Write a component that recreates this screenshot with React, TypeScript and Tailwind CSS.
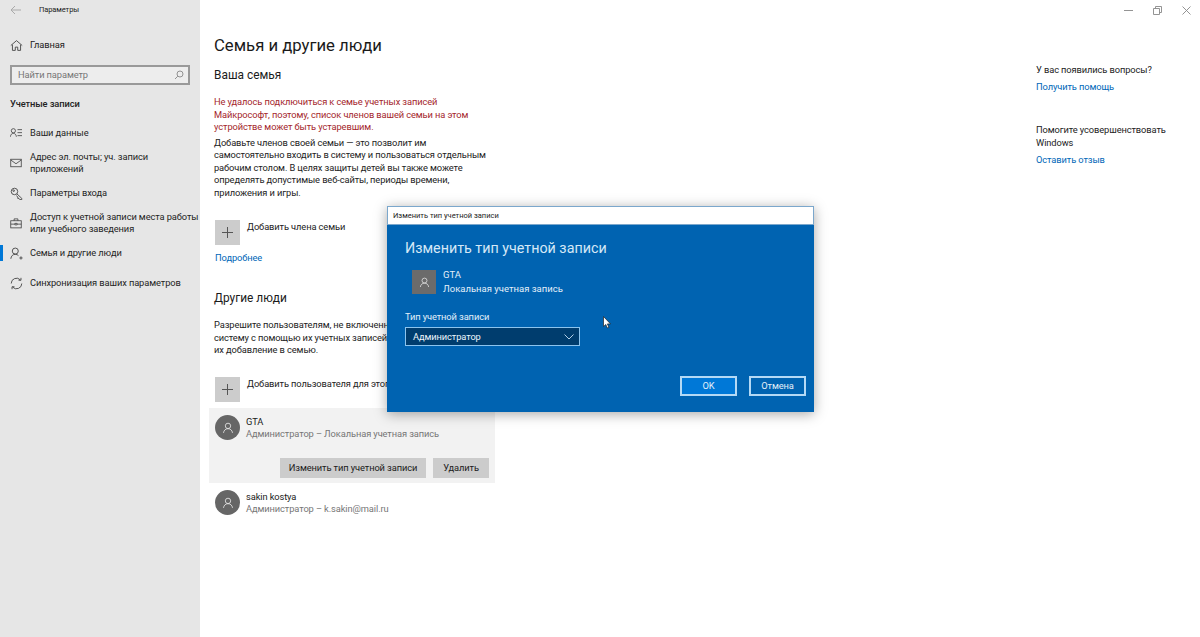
import React from "react";

const Ic = ({ children, size = 14, className = "" }: { children: React.ReactNode; size?: number; className?: string }) => (
  <svg width={size} height={size} viewBox="0 0 16 16" fill="none" stroke="currentColor" strokeWidth={1.1} className={className}>
    {children}
  </svg>
);

const Person = ({ size = 14, className = "" }: { size?: number; className?: string }) => (
  <Ic size={size} className={className}>
    <circle cx="8" cy="5.2" r="3.6" />
    <path d="M2 14.5c.4-3.4 2.8-5.6 6-5.6s5.600 2.200 6 5.600" />
  </Ic>
);

const Plus = () => (
  <div className="w-[25px] h-[25px] bg-[#cccccc] flex items-center justify-center shrink-0 text-[#555]">
    <svg width="11" height="11" viewBox="0 0 11 11" stroke="currentColor" strokeWidth="1">
      <path d="M5.500 0v11M0 5.500h11" />
    </svg>
  </div>
);

const NavItem = ({ icon, lines, active }: { icon: React.ReactNode; lines: string[]; active?: boolean }) => (
  <div className="relative flex items-center h-[30px] pl-[10px] text-[#1f1f1f]">
    {active && <div className="absolute left-0 top-[7px] w-[3px] h-[16px] bg-[#0078d7]" />}
    <div className="w-[20px] shrink-0 flex items-center text-[#444]">{icon}</div>
    <div className="leading-[12px] whitespace-nowrap">
      {lines.map((l) => (
        <div key={l}>{l}</div>
      ))}
    </div>
  </div>
);

const PersonRow = ({ name, sub }: { name: string; sub: string }) => (
  <div className="flex items-center gap-[6px]">
    <div className="w-[25px] h-[25px] rounded-full bg-[#666666] flex items-center justify-center text-[#e8e8e8]">
      <Person size={12} />
    </div>
    <div className="leading-[12.500px] pt-[1px]">
      <div className="text-[#1a1a1a]">{name}</div>
      <div className="text-[#767676]">{sub}</div>
    </div>
  </div>
);

export default function App() {
  return (
    <div
      className="relative w-[1200px] h-[637px] overflow-hidden bg-white flex text-[9.300px] tracking-[-0.1px] text-[#222]"
      style={{ fontFamily: 'Roboto, "Noto Sans", sans-serif' }}
    >
      {/* Sidebar */}
      <aside className="w-[200px] h-full bg-[#e6e6e6] shrink-0">
        <div className="flex items-center h-[20px] pl-[10px] text-[7.500px] text-[#222]">
          <svg width="11" height="10" viewBox="0 0 11 10" fill="none" stroke="#aaaaaa" strokeWidth="1">
            <path d="M11 5H1M5 1 1 5l4 4" />
          </svg>
          <span className="ml-[18px]">Параметры</span>
        </div>
        <div className="flex items-center h-[30px] mt-[10px] pl-[10px]">
          <div className="w-[20px] text-[#444]">
            <Ic size={13}>
              <path d="M1 8 8 2l7 6M3 7v7h3.500v-4h3v4H13V7" />
            </Ic>
          </div>
          <span>Главная</span>
        </div>
        <div className="mx-[10px] mt-[5px] h-[20px] border-2 border-[#999999] bg-[#ededed] flex items-center justify-between pl-[6px] pr-[4px] text-[#767676]">
          <span>Найти параметр</span>
          <svg width="10" height="10" viewBox="0 0 10 10" fill="none" stroke="#888" strokeWidth="0.9">
            <circle cx="6" cy="4" r="3" />
            <path d="M3.800 6.200 1 9" />
          </svg>
        </div>
        <div className="pl-[10px] mt-[12px] font-medium leading-[14px]">Учетные записи</div>
        <div className="mt-[7px]">
          <NavItem
            icon={
              <Ic size={12}>
                <circle cx="4.500" cy="5" r="2.800" />
                <path d="M.5 13c.3-2.800 1.800-4.500 4-4.500s3.700 1.700 4 4.500M10 3.500h6M10 7.500h6M10 11.500h6" />
              </Ic>
            }
            lines={["Ваши данные"]}
          />
          <NavItem
            icon={
              <Ic size={12}>
                <rect x="1" y="3" width="14" height="10" />
                <path d="m1 4 7 5 7-5" />
              </Ic>
            }
            lines={["Адрес эл. почты; уч. записи", "приложений"]}
          />
          <NavItem
            icon={
              <Ic size={13}>
                <circle cx="5.500" cy="5.500" r="4" />
                <circle cx="4.500" cy="4.500" r="1" />
                <path d="m8.500 8.500 6 5.500v1.500h-2.500l-1-1.500h-1.500v-1.500L8 10.500" />
              </Ic>
            }
            lines={["Параметры входа"]}
          />
          <NavItem
            icon={
              <Ic size={12}>
                <rect x="1" y="5" width="14" height="9.500" />
                <path d="M5.500 5V2.500h5V5M1 9.500h5.500M9.500 9.500H15M6.500 8.500h3v2h-3z" />
              </Ic>
            }
            lines={["Доступ к учетной записи места работы", "или учебного заведения"]}
          />
          <NavItem
            active
            icon={
              <Ic size={13}>
                <circle cx="6.500" cy="5" r="3.700" />
                <path d="M1 14.500c.4-3.400 2.400-5.500 5.500-5.500 1.600 0 3 .6 3.900 1.600M13.500 11.500v4M11.500 13.500h4" />
              </Ic>
            }
            lines={["Семья и другие люди"]}
          />
          <NavItem
            icon={
              <Ic size={13}>
                <path d="M1.500 8a6.500 6.500 0 0 1 11.300-4.400M14.500 8a6.500 6.500 0 0 1-11.300 4.400M13.500 1v3h-3M2.500 15v-3h3" />
              </Ic>
            }
            lines={["Синхронизация ваших параметров"]}
          />
        </div>
      </aside>

      {/* Main column */}
      <main className="w-[296px] shrink-0 pl-[9px] pt-[34px]">
        <div className="pl-[5px]">
          <h1 className="text-[16.700px] tracking-normal leading-[24px] text-[#1a1a1a] whitespace-nowrap">Семья и другие люди</h1>
          <h2 className="mt-[9px] text-[11.900px] tracking-normal leading-[16px] text-[#1a1a1a]">Ваша семья</h2>
          <p className="mt-[13px] leading-[12.500px] text-[#a4262c] whitespace-nowrap">
            Не удалось подключиться к семье учетных записей
            <br />
            Майкрософт, поэтому, список членов вашей семьи на этом
            <br />
            устройстве может быть устаревшим.
          </p>
          <p className="mt-[3px] leading-[12.500px] whitespace-nowrap">
            Добавьте членов своей семьи — это позволит им
            <br />
            самостоятельно входить в систему и пользоваться отдельным
            <br />
            рабочим столом. В целях защиты детей вы также можете
            <br />
            определять допустимые веб-сайты, периоды времени,
            <br />
            приложения и игры.
          </p>
          <div className="mt-[21px] flex gap-[7px] pl-[1px]">
            <Plus />
            <span className="leading-[14px]">Добавить члена семьи</span>
          </div>
          <div className="mt-[6px] leading-[14px] text-[#0067b8] pl-[1px]">Подробнее</div>
          <h2 className="mt-[25px] text-[11.900px] tracking-normal leading-[16px] text-[#1a1a1a]">Другие люди</h2>
          <p className="mt-[13px] leading-[12.500px] whitespace-nowrap">
            Разрешите пользователям, не включенным в вашу семью, входить в
            <br />
            систему с помощью их учетных записей. Это не потребует
            <br />
            их добавление в семью.
          </p>
          <div className="mt-[20px] flex gap-[7px] pl-[1px]">
            <Plus />
            <span className="leading-[14px] whitespace-nowrap">Добавить пользователя для этого компьютера</span>
          </div>
        </div>
        <div className="mt-[6px] w-[286px] h-[75px] bg-[#f2f2f2] pt-[7px] pl-[6px] pr-[6px]">
          <PersonRow name="GTA" sub="Администратор – Локальная учетная запись" />
          <div className="mt-[17px] flex justify-end gap-[7px] pr-0">
            <div className="w-[146px] h-[20px] bg-[#cccccc] flex items-center justify-center text-[#1a1a1a] whitespace-nowrap">
              Изменить тип учетной записи
            </div>
            <div className="w-[56px] h-[20px] bg-[#cccccc] flex items-center justify-center text-[#1a1a1a]">
              Удалить
            </div>
          </div>
        </div>
        <div className="mt-[7px] pl-[6px]">
          <PersonRow name="sakin kostya" sub="Администратор – k.sakin@mail.ru" />
        </div>
      </main>

      <div className="flex-1" />

      {/* Right column */}
      <aside className="w-[164px] shrink-0 relative">
        <div className="flex justify-end text-[#888] h-[20px] items-center pr-[9px] gap-[20px]">
          <svg width="9" height="9" viewBox="0 0 9 9" stroke="currentColor" strokeWidth="0.9" fill="none">
            <path d="M0 4.500h9" />
          </svg>
          <svg width="9" height="9" viewBox="0 0 9 9" stroke="currentColor" strokeWidth="0.9" fill="none">
            <path d="M.5 2.500h6v6h-6zM2.500 2.500v-2h6v6h-2" />
          </svg>
          <svg width="9" height="9" viewBox="0 0 9 9" stroke="currentColor" strokeWidth="0.9" fill="none">
            <path d="m.5.5 8 8M8.500.5l-8 8" />
          </svg>
        </div>
        <div className="mt-[43px] leading-[14px] whitespace-nowrap">У вас появились вопросы?</div>
        <div className="mt-[3px] leading-[14px] text-[#0067b8]">Получить помощь</div>
        <div className="mt-[30px] leading-[12.500px] whitespace-nowrap">
          Помогите усовершенствовать
          <br />
          Windows
        </div>
        <div className="mt-[4px] leading-[14px] text-[#0067b8]">Оставить отзыв</div>
      </aside>

      {/* Dialog */}
      <div className="absolute left-[387px] top-[206px] w-[427px] h-[206px] flex flex-col shadow-[0_2px_12px_rgba(0,0,0,0.35)] bg-[#0063b1]">
        <div className="h-[19px] bg-white border border-[#7ba7cc] flex items-center pl-[5px] text-[7.500px] tracking-normal text-[#222]">
          Изменить тип учетной записи
        </div>
        <div className="flex-1 pl-[18px] text-white">
          <div className="mt-[13px] text-[14.300px] tracking-normal leading-[20px] text-[#d5e8f7] whitespace-nowrap">
            Изменить тип учетной записи
          </div>
          <div className="mt-[10px] ml-[7px] flex items-center gap-[7px]">
            <div className="w-[24px] h-[24px] bg-[#6b6b6b] flex items-center justify-center text-[#e8e8e8]">
              <Person size={11} />
            </div>
            <div className="leading-[14px] text-[9.500px] tracking-normal text-[#e3eff9]">
              <div>GTA</div>
              <div>Локальная учетная запись</div>
            </div>
          </div>
          <div className="mt-[14px] leading-[14px] text-[#e3eff9]">Тип учетной записи</div>
          <div className="mt-[3px] w-[175px] h-[19px] bg-[#003d6e] border border-[#8cc4ee] flex items-center justify-between pl-[7px] pr-[5px] text-[#eef6fc]">
            <span>Администратор</span>
            <svg width="10" height="6" viewBox="0 0 10 6" fill="none" stroke="#c5dff3" strokeWidth="0.9">
              <path d="m.5.5 4.500 4.500L9.500.5" />
            </svg>
          </div>
          <div className="mt-[30px] flex justify-end gap-[12px] pr-[8px]">
            <div className="w-[57px] h-[20px] bg-[#0078d7] border-2 border-[#b4d9f5] flex items-center justify-center text-[#e3eff9]">
              OK
            </div>
            <div className="w-[57px] h-[20px] border-2 border-[#b4d9f5] flex items-center justify-center text-[#e3eff9]">
              Отмена
            </div>
          </div>
        </div>
      </div>

      {/* Mouse pointer */}
      <svg className="absolute left-[603px] top-[316px]" width="8" height="13" viewBox="0 0 8 13">
        <path d="M.5.5v10l2.300-2 1.500 3.500 1.600-.7-1.500-3.400H7.500z" fill="#fff" stroke="#222" strokeWidth="0.7" />
      </svg>
    </div>
  );
}
